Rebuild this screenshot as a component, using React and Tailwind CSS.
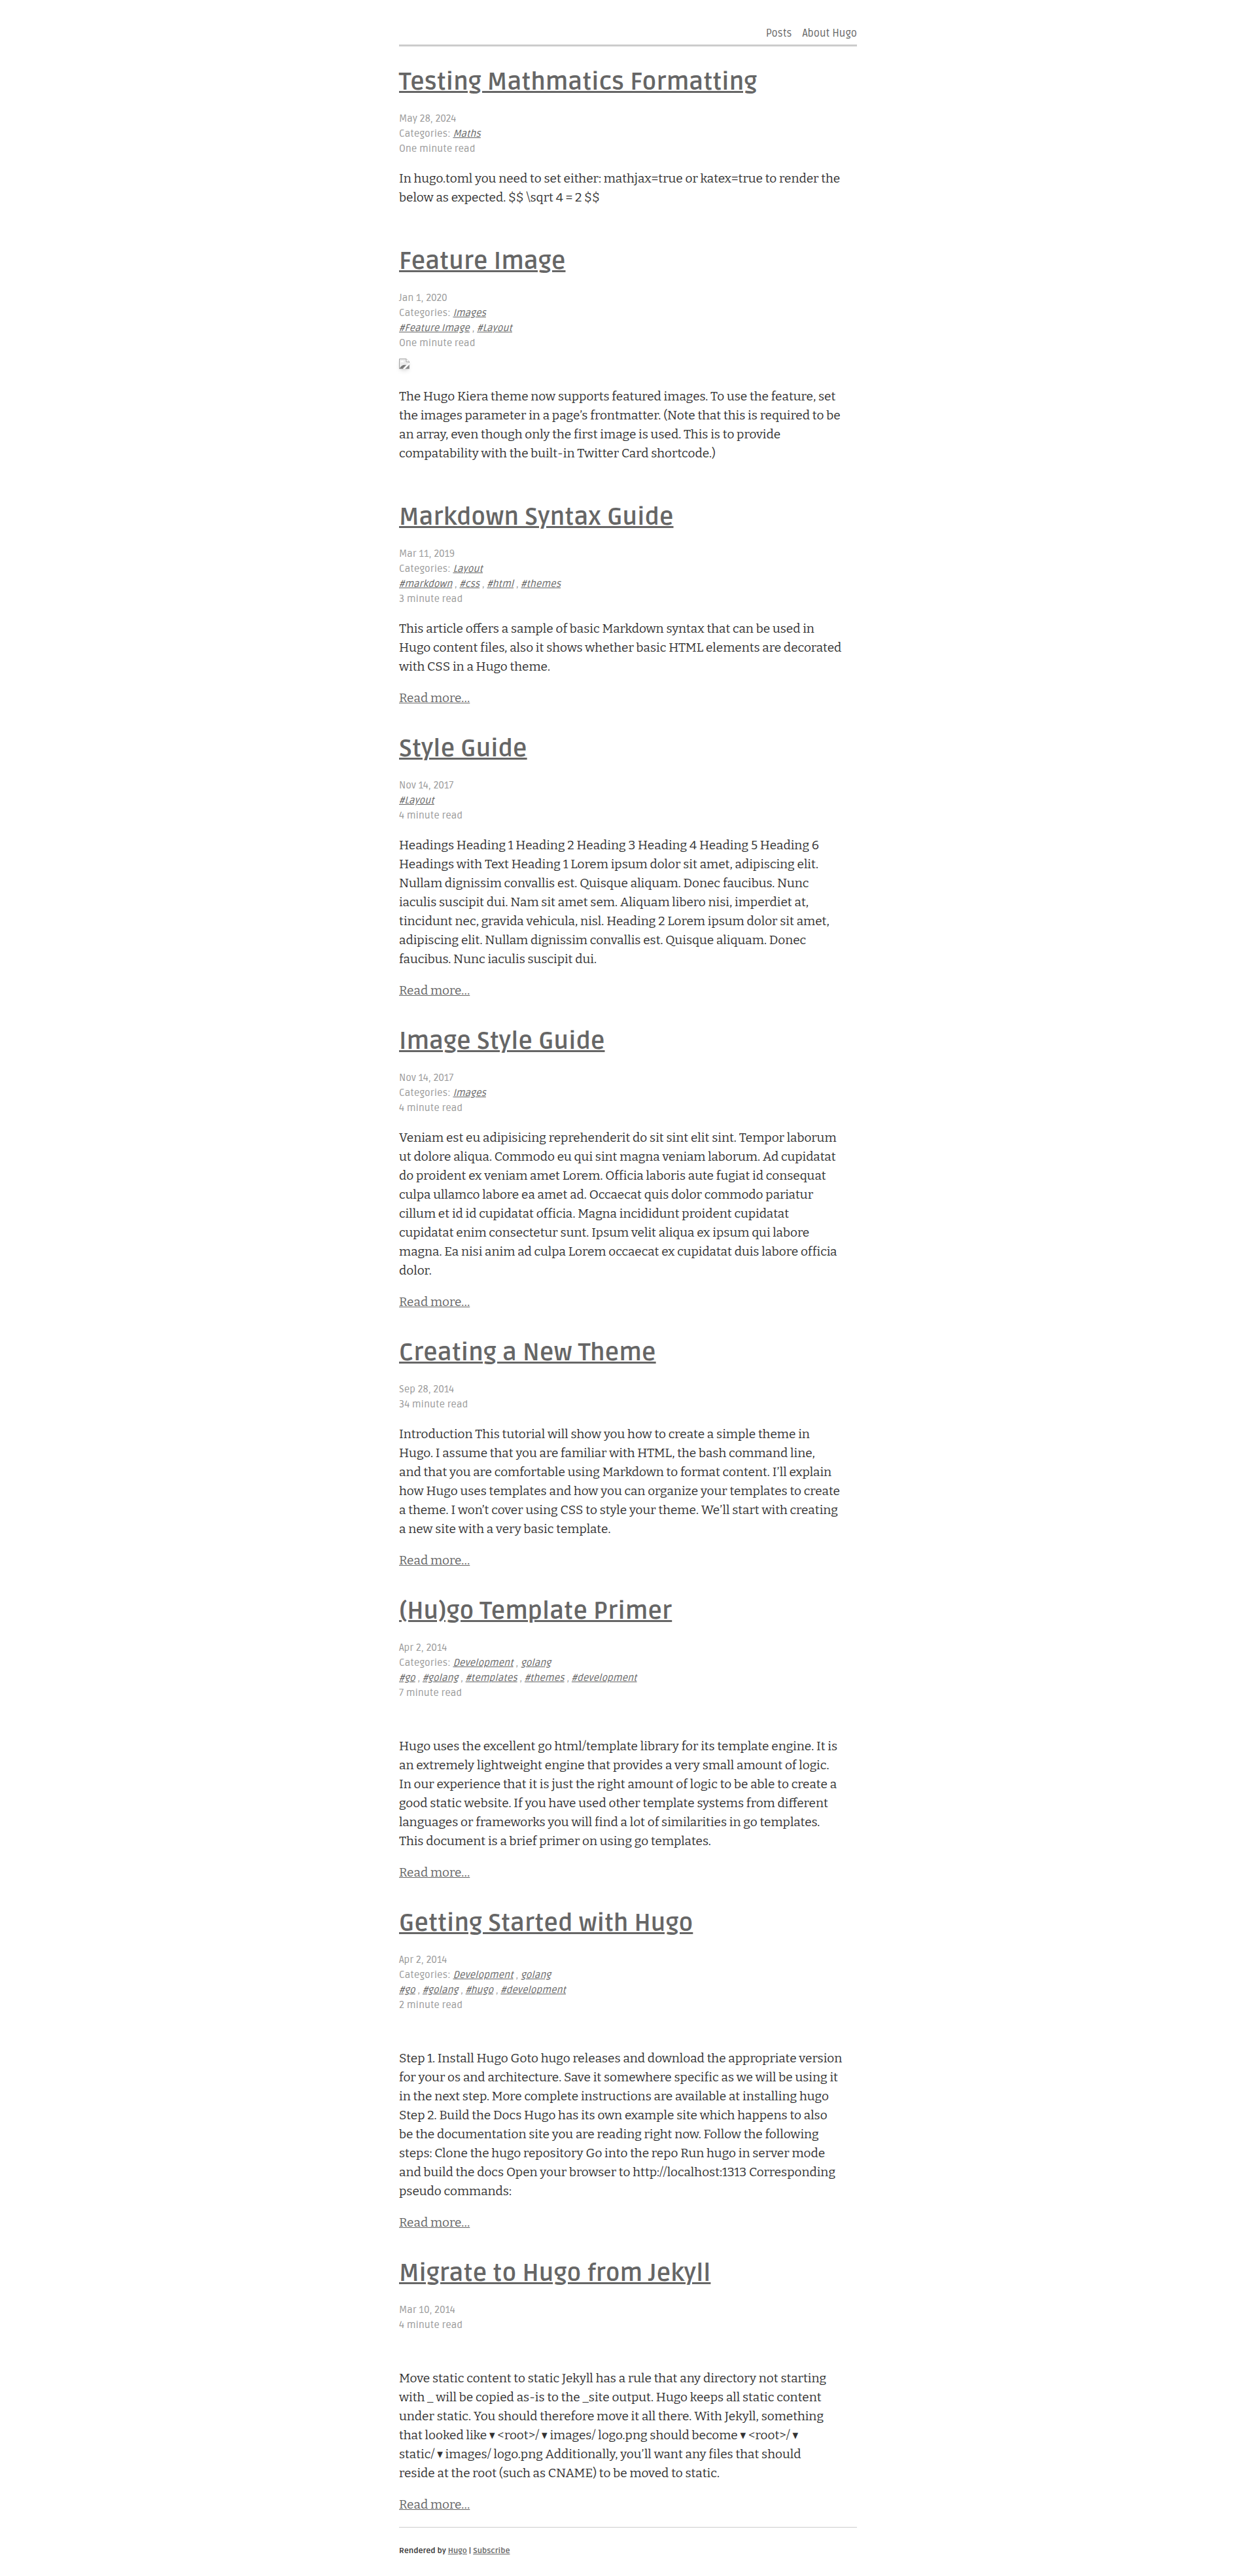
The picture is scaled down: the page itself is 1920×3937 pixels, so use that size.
import React from 'react';

const POSTS = [
  {
    title: 'Testing Mathmatics Formatting',
    date: 'May 28, 2024',
    categories: ['Maths'],
    readTime: 'One minute read',
    summary: `In hugo.toml you need to set either: mathjax=true or katex=true to render the
below as expected. $$ \\sqrt 4 = 2 $$`,
  },
  {
    title: 'Feature Image',
    date: 'Jan 1, 2020',
    categories: ['Images'],
    tags: ['#Feature Image', '#Layout'],
    readTime: 'One minute read',
    image: true,
    summary: `The Hugo Kiera theme now supports featured images. To use the feature, set
the images parameter in a page’s frontmatter. (Note that this is required to be
an array, even though only the first image is used. This is to provide
compatability with the built-in Twitter Card shortcode.)`,
  },
  {
    title: 'Markdown Syntax Guide',
    date: 'Mar 11, 2019',
    categories: ['Layout'],
    tags: ['#markdown', '#css', '#html', '#themes'],
    readTime: '3 minute read',
    more: true,
    summary: `This article offers a sample of basic Markdown syntax that can be used in
Hugo content files, also it shows whether basic HTML elements are decorated
with CSS in a Hugo theme.`,
  },
  {
    title: 'Style Guide',
    date: 'Nov 14, 2017',
    tags: ['#Layout'],
    readTime: '4 minute read',
    more: true,
    summary: `Headings Heading 1 Heading 2 Heading 3 Heading 4 Heading 5 Heading 6
Headings with Text Heading 1 Lorem ipsum dolor sit amet, adipiscing elit.
Nullam dignissim convallis est. Quisque aliquam. Donec faucibus. Nunc
iaculis suscipit dui. Nam sit amet sem. Aliquam libero nisi, imperdiet at,
tincidunt nec, gravida vehicula, nisl. Heading 2 Lorem ipsum dolor sit amet,
adipiscing elit. Nullam dignissim convallis est. Quisque aliquam. Donec
faucibus. Nunc iaculis suscipit dui.`,
  },
  {
    title: 'Image Style Guide',
    date: 'Nov 14, 2017',
    categories: ['Images'],
    readTime: '4 minute read',
    more: true,
    summary: `Veniam est eu adipisicing reprehenderit do sit sint elit sint. Tempor laborum
ut dolore aliqua. Commodo eu qui sint magna veniam laborum. Ad cupidatat
do proident ex veniam amet Lorem. Officia laboris aute fugiat id consequat
culpa ullamco labore ea amet ad. Occaecat quis dolor commodo pariatur
cillum et id id cupidatat officia. Magna incididunt proident cupidatat
cupidatat enim consectetur sunt. Ipsum velit aliqua ex ipsum qui labore
magna. Ea nisi anim ad culpa Lorem occaecat ex cupidatat duis labore officia
dolor.`,
  },
  {
    title: 'Creating a New Theme',
    date: 'Sep 28, 2014',
    readTime: '34 minute read',
    more: true,
    summary: `Introduction This tutorial will show you how to create a simple theme in
Hugo. I assume that you are familiar with HTML, the bash command line,
and that you are comfortable using Markdown to format content. I’ll explain
how Hugo uses templates and how you can organize your templates to create
a theme. I won’t cover using CSS to style your theme. We’ll start with creating
a new site with a very basic template.`,
  },
  {
    title: '(Hu)go Template Primer',
    date: 'Apr 2, 2014',
    categories: ['Development', 'golang'],
    tags: ['#go', '#golang', '#templates', '#themes', '#development'],
    readTime: '7 minute read',
    toc: true,
    more: true,
    summary: `Hugo uses the excellent go html/template library for its template engine. It is
an extremely lightweight engine that provides a very small amount of logic.
In our experience that it is just the right amount of logic to be able to create a
good static website. If you have used other template systems from different
languages or frameworks you will find a lot of similarities in go templates.
This document is a brief primer on using go templates.`,
  },
  {
    title: 'Getting Started with Hugo',
    date: 'Apr 2, 2014',
    categories: ['Development', 'golang'],
    tags: ['#go', '#golang', '#hugo', '#development'],
    readTime: '2 minute read',
    toc: true,
    more: true,
    summary: `Step 1. Install Hugo Goto hugo releases and download the appropriate version
for your os and architecture. Save it somewhere specific as we will be using it
in the next step. More complete instructions are available at installing hugo
Step 2. Build the Docs Hugo has its own example site which happens to also
be the documentation site you are reading right now. Follow the following
steps: Clone the hugo repository Go into the repo Run hugo in server mode
and build the docs Open your browser to http://localhost:1313 Corresponding
pseudo commands:`,
  },
  {
    title: 'Migrate to Hugo from Jekyll',
    date: 'Mar 10, 2014',
    readTime: '4 minute read',
    toc: true,
    more: true,
    summary: `Move static content to static Jekyll has a rule that any directory not starting
with _ will be copied as-is to the _site output. Hugo keeps all static content
under static. You should therefore move it all there. With Jekyll, something
that looked like ▾ <root>/ ▾ images/ logo.png should become ▾ <root>/ ▾
static/ ▾ images/ logo.png Additionally, you’ll want any files that should
reside at the root (such as CNAME) to be moved to static.`,
  },
];

function TermLinks({ terms }) {
  return terms.map((term, i) => (
    <React.Fragment key={term}>
      {i > 0 && ' , '}
      <a href="#" className="italic text-[#666] underline underline-offset-1">{term}</a>
    </React.Fragment>
  ));
}

function BrokenImage() {
  return (
    <svg width="16" height="16" viewBox="0 0 16 16" className="shadow-md" role="img" aria-label="Feature image">
      <path d="M0.5 0.5H11L15.5 5V15.5H0.5Z" fill="#ececec" stroke="#a3a3a3" />
      <path d="M11 0.5V5H15.5" fill="#fff" stroke="#a3a3a3" />
      <path d="M2 5.5C2 4 4 4 4.500 3C6 2.500 7 4 8 5.500Z" fill="#fff" />
      <path d="M1 15C3 11 6 9 11 10L6 15Z" fill="#7a7a7a" />
      <path d="M6 16L16 6V9L9 16Z" fill="#fff" />
      <path d="M10 15L15 10V15Z" fill="#8a8a8a" />
    </svg>
  );
}

function Post({ post }) {
  return (
    <article className="mb-10">
      <h2 className="text-[37px] leading-[48px] font-bold font-[Ruda,'Open_Sans',sans-serif]">
        <a href="#" className="text-[#666] underline decoration-3 underline-offset-2">{post.title}</a>
      </h2>
      <div className="mt-5 text-[15px] leading-[23px] text-[#999] font-[Ruda,'Open_Sans',sans-serif]">
        <p><time>{post.date}</time></p>
        {post.categories && <p>Categories: <TermLinks terms={post.categories} /></p>}
        {post.tags && <p><TermLinks terms={post.tags} /></p>}
        <p>{post.readTime}</p>
      </div>
      {post.image && <div className="mt-3 flex h-6"><BrokenImage /></div>}
      {/* empty table of contents still takes up its row */}
      {post.toc && <div className="h-9" />}
      <p className={`mt-[19px] whitespace-pre-line ${post.more ? '' : 'mb-15'}`}>{post.summary}</p>
      {post.more && (
        <p className="mt-[19px]">
          <a href="#" className="text-[#666] underline underline-offset-1">Read more…</a>
        </p>
      )}
    </article>
  );
}

export default function App() {
  return (
    <div className="min-h-screen bg-white px-4 text-[19px] leading-[29px] text-[#333] font-['Roboto_Slab',Bitter,'DejaVu_Serif_Condensed',serif]">
      <div className="mx-auto max-w-[700px]">
        <header className="mb-[31px] border-b-3 border-[#ccc] pt-[37px] pb-[3px] font-[Ruda,'Open_Sans',sans-serif]">
          <nav className="flex justify-end gap-4 text-base leading-7">
            <a href="#" className="text-[#666]">Posts</a>
            <a href="#" className="text-[#666]">About Hugo</a>
          </nav>
        </header>
        <main>
          {POSTS.map((post) => <Post key={post.title} post={post} />)}
        </main>
        <footer className="-mt-5 border-t border-[#ccc] pt-6 pb-6 text-xs leading-6 font-bold font-[Ruda,'Open_Sans',sans-serif]">
          Rendered by <a href="#" className="text-[#666] underline underline-offset-1">Hugo</a> |{' '}
          <a href="#" className="text-[#666] underline underline-offset-1">Subscribe</a>
        </footer>
      </div>
    </div>
  );
}
